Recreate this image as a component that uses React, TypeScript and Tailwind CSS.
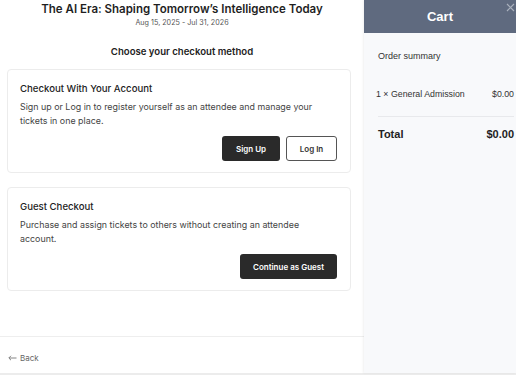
import React from 'react';

const Checkout: React.FC = () => {
  return (
    <div className="flex h-[373px] w-[364px] flex-col bg-white font-['Inter',sans-serif] text-[#222]">
      <div className="flex-1">
        <div className="pt-[1px] text-center">
          <h1 className="text-[11.5px] font-semibold leading-[16px] text-[#1f1f1f]">
            The AI Era: Shaping Tomorrow’s Intelligence Today
          </h1>
          <p className="mt-[1px] text-[7.2px] leading-[10px] text-[#555]">Aug 15, 2025 - Jul 31, 2026</p>
          <h2 className="mt-[18px] text-[9.6px] font-semibold leading-[12px] text-[#222]">Choose your checkout method</h2>
        </div>

        <div className="mt-[11px] flex flex-col gap-[14px] pl-[7px] pr-[13px]">
          <div className="rounded-[4px] border border-[#ececec] pb-[11px] pl-[12px] pr-[20px] pt-[12px]">
            <h3 className="text-[9.6px] font-medium leading-[14px] text-[#222]">Checkout With Your Account</h3>
            <p className="mt-[4px] text-[8.9px] leading-[14px] text-[#444]">
              Sign up or Log in to register yourself as an attendee and manage your tickets in one place.
            </p>
            <div className="mr-[-7px] mt-[8px] flex justify-end gap-[6px]">
              <button className="h-[25px] w-[58px] rounded-[3px] bg-[#2a2a2a] text-[8px] font-semibold text-white">
                Sign Up
              </button>
              <button className="h-[25px] w-[51px] rounded-[3px] border border-[#555] bg-white text-[8px] font-semibold text-[#333]">
                Log In
              </button>
            </div>
          </div>

          <div className="rounded-[4px] border border-[#ececec] pb-[11px] pl-[12px] pr-[20px] pt-[12px]">
            <h3 className="text-[9.6px] font-medium leading-[14px] text-[#222]">Guest Checkout</h3>
            <p className="mt-[4px] text-[8.9px] leading-[14px] text-[#444]">
              Purchase and assign tickets to others without creating an attendee account.
            </p>
            <div className="mr-[-7px] mt-[8px] flex justify-end">
              <button className="h-[25px] w-[97px] rounded-[3px] bg-[#2a2a2a] text-[8px] font-semibold text-white">
                Continue as Guest
              </button>
            </div>
          </div>
        </div>
      </div>

      <div className="flex h-[37px] items-start border-t border-[#eeeeee] pl-[8px] pt-[16px] text-[8px] leading-[10px] text-[#666]">
        <svg width="9" height="6" viewBox="0 0 9 6" className="mr-[3px] mt-[2px]" fill="none" stroke="#777" strokeWidth="0.9">
          <path d="M8.5 3H1M3 0.8L0.8 3L3 5.2" />
        </svg>
        Back
      </div>
    </div>
  );
};

const Cart: React.FC = () => {
  return (
    <div className="relative flex h-[373px] flex-1 flex-col bg-[#f8f9fb] font-['Liberation_Sans',Arial,sans-serif] shadow-[-1px_0_2px_rgba(0,0,0,0.06)]">
      <div className="flex h-[33px] items-center justify-center bg-[#5f6a7f] text-[13px] font-semibold text-white">
        Cart
      </div>
      <svg width="9" height="9" viewBox="0 0 9 9" className="absolute right-[1px] top-[3px]" stroke="#aab1bd" strokeWidth="1.2">
        <path d="M1 1L8 8M8 1L1 8" />
      </svg>
      <div className="pl-[14px] pr-[2px]">
        <p className="mt-[18px] text-[9px] leading-[11px] text-[#333]">Order summary</p>
        <div className="ml-[-2px] mt-[26px] flex justify-between text-[8.8px] leading-[12px] text-[#333]">
          <span>1 × General Admission</span>
          <span>$0.00</span>
        </div>
        <div className="mt-[16px] border-t border-[#e8e9ec]" />
        <div className="mt-[11px] flex justify-between text-[11px] font-bold leading-[13px] text-[#222]">
          <span>Total</span>
          <span>$0.00</span>
        </div>
      </div>
    </div>
  );
};

const App: React.FC = () => {
  return (
    <div className="h-[375px] w-[516px] overflow-hidden bg-[#ececec]">
      <div className="flex">
        <Checkout />
        <Cart />
      </div>
    </div>
  );
};

export default App;
